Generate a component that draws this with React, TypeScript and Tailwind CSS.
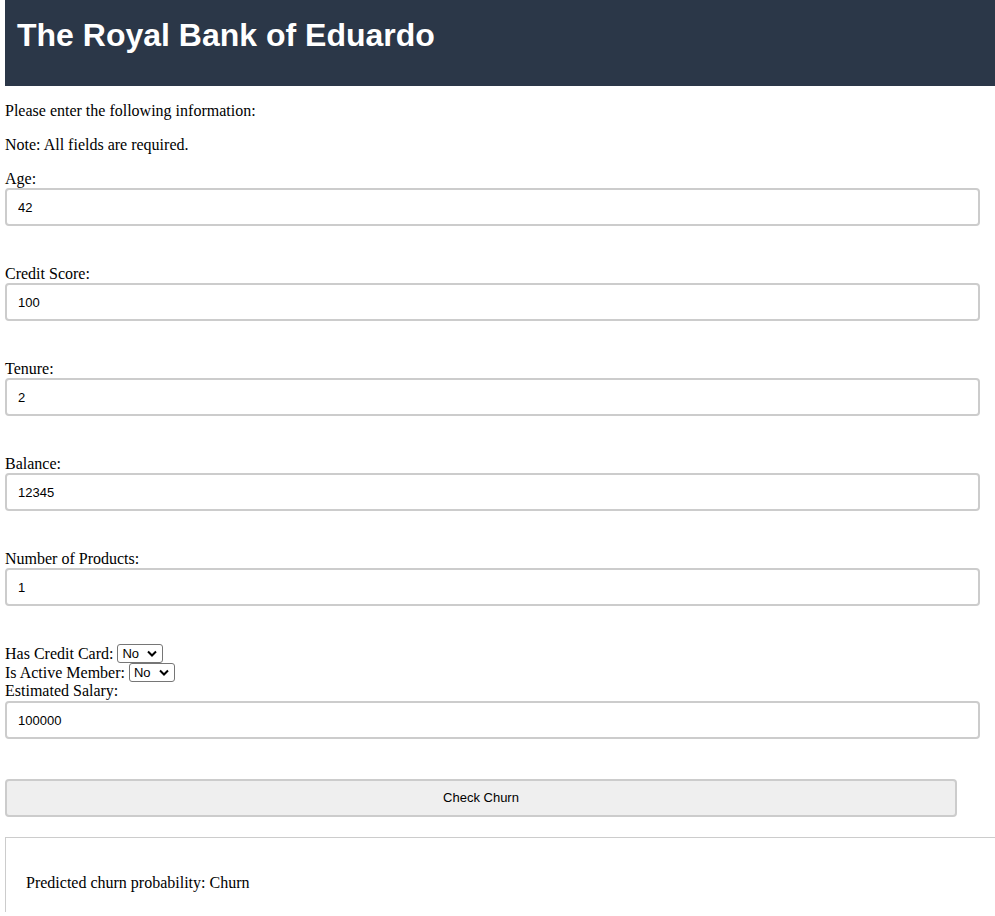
import { useState } from 'react';

const fields = [
  { id: 'age', label: 'Age:', value: '42' },
  { id: 'credit', label: 'Credit Score:', value: '100' },
  { id: 'tenure', label: 'Tenure:', value: '2' },
  { id: 'balance', label: 'Balance:', value: '12345' },
  { id: 'products', label: 'Number of Products:', value: '1' },
];

const inputCls =
  "block w-[975px] h-[38px] border-2 border-[#cccccc] rounded-[4px] px-[11px] text-[13px] text-black font-['Liberation_Sans',Arial,sans-serif] outline-none";

const YesNo = ({ value, onChange }: { value: string; onChange: (v: string) => void }) => (
  <span className="relative inline-block align-top h-[19px]">
    <select
      value={value}
      onChange={(e) => onChange(e.target.value)}
      className="block appearance-none h-[19px] w-[46px] border border-[#767676] rounded-[3px] bg-white pl-[4px] text-[13px] leading-[17px] font-['Liberation_Sans',Arial,sans-serif] text-black"
    >
      <option>No</option>
      <option>Yes</option>
    </select>
    <svg className="pointer-events-none absolute right-[6px] top-[6px] w-[10px] h-[7px]" viewBox="0 0 10 7">
      <path d="M1 1.5 L5 5.5 L9 1.5" fill="none" stroke="#000" strokeWidth="2" />
    </svg>
  </span>
);

export default function App() {
  const [values, setValues] = useState<Record<string, string>>(
    Object.fromEntries(fields.map((f) => [f.id, f.value]))
  );
  const [card, setCard] = useState('No');
  const [active, setActive] = useState('No');
  const [salary, setSalary] = useState('100000');

  return (
    <div className="min-h-screen bg-white pl-[5px] text-black font-['Liberation_Serif','Times_New_Roman',serif] text-[16px]">
      {/* Header */}
      <header className="h-[86px] bg-[#2b3748] pl-3 pt-[17px]">
        <h1 className="text-[32px] leading-[37px] font-bold text-white font-['Liberation_Sans',Arial,sans-serif]">
          The Royal Bank of Eduardo
        </h1>
      </header>

      <p className="mt-4 leading-[18px]">Please enter the following information:</p>
      <p className="mt-4 leading-[18px]">Note: All fields are required.</p>

      <form className="mt-[15px]" onSubmit={(e) => e.preventDefault()}>
        {fields.map((f) => (
          <div key={f.id}>
            <label htmlFor={f.id} className="block leading-[19px]">{f.label}</label>
            <input
              id={f.id}
              type="text"
              value={values[f.id]}
              onChange={(e) => setValues({ ...values, [f.id]: e.target.value })}
              className={`${inputCls} mb-[38px]`}
            />
          </div>
        ))}

        <div className="h-[19px] leading-[20px]">
          Has Credit Card: <YesNo value={card} onChange={setCard} />
        </div>
        <div className="h-[19px] leading-[19px]">
          Is Active Member: <YesNo value={active} onChange={setActive} />
        </div>
        <label htmlFor="salary" className="block h-[19px] leading-[18px]">Estimated Salary:</label>
        <input
          id="salary"
          type="text"
          value={salary}
          onChange={(e) => setSalary(e.target.value)}
          className={inputCls}
        />

        <button
          type="submit"
          className="mt-[40px] block w-[952px] h-[38px] bg-[#efefef] border-2 border-[#cccccc] rounded-[4px] text-[13px] text-black font-['Liberation_Sans',Arial,sans-serif]"
        >
          Check Churn
        </button>
      </form>

      <div className="mt-[20px] border-t border-l border-[#cccccc] px-5 pt-5 pb-5">
        <p className="mt-4 leading-[18px]">Predicted churn probability: Churn</p>
      </div>
    </div>
  );
}
